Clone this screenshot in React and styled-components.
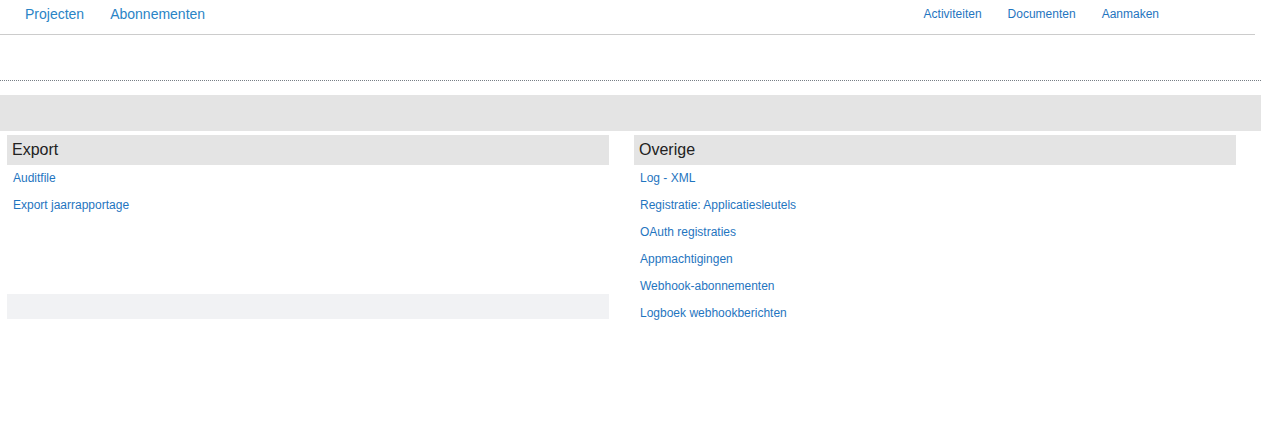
import React from 'react';
import styled, { createGlobalStyle } from 'styled-components';

const GlobalStyle = createGlobalStyle`
  body {
    margin: 0;
    background: #fff;
    font-family: "Liberation Sans", Arial, sans-serif;
  }
`;

const TopNav = styled.nav`
  display: flex;
  justify-content: space-between;
  width: 1255px;
  height: 34px;
  border-bottom: 1px solid #cccccc;
`;

const NavGroup = styled.div`
  display: flex;
  gap: 26px;
  padding: ${(p) => (p.right ? '0 96px 0 0' : '0 0 0 25px')};
`;

const NavLink = styled.a`
  line-height: 28px;
  font-size: ${(p) => (p.small ? '12px' : '14px')};
  color: ${(p) => (p.small ? '#1f75c0' : '#2a84c6')};
  text-decoration: none;
  cursor: pointer;
`;

const DottedRule = styled.div`
  margin-top: 45px;
  border-top: 1px dotted #777e85;
`;

const Band = styled.div`
  margin-top: 14px;
  height: 36px;
  background: #e4e4e4;
`;

const Panels = styled.div`
  display: grid;
  grid-template-columns: 602px 602px;
  gap: 25px;
  padding: 4px 0 0 7px;
`;

const Panel = styled.section`
  display: flex;
  flex-direction: column;
`;

const PanelHeader = styled.h2`
  margin: 0;
  height: 30px;
  line-height: 30px;
  padding-left: 5px;
  background: #e4e4e4;
  font-size: 16px;
  font-weight: normal;
  color: #222;
`;

const LinkList = styled.ul`
  list-style: none;
  margin: 0;
  padding: 0;
`;

const Item = styled.li`
  height: 27px;
  line-height: 23px;
  padding-left: 6px;
`;

const ItemLink = styled.a`
  font-size: 12px;
  color: #1f75c0;
  text-decoration: none;
  cursor: pointer;
`;

const Footer = styled.div`
  margin-top: 75px;
  height: 25px;
  background: #f1f2f4;
`;

const exportLinks = ['Auditfile', 'Export jaarrapportage'];
const overigLinks = [
  'Log - XML',
  'Registratie: Applicatiesleutels',
  'OAuth registraties',
  'Appmachtigingen',
  'Webhook-abonnementen',
  'Logboek webhookberichten',
];

export default function App() {
  return (
    <>
      <GlobalStyle />
      <TopNav>
        <NavGroup>
          <NavLink>Projecten</NavLink>
          <NavLink>Abonnementen</NavLink>
        </NavGroup>
        <NavGroup right>
          <NavLink small>Activiteiten</NavLink>
          <NavLink small>Documenten</NavLink>
          <NavLink small>Aanmaken</NavLink>
        </NavGroup>
      </TopNav>
      <DottedRule />
      <Band />
      <Panels>
        <Panel>
          <PanelHeader>Export</PanelHeader>
          <LinkList>
            {exportLinks.map((l) => (
              <Item key={l}>
                <ItemLink>{l}</ItemLink>
              </Item>
            ))}
          </LinkList>
          <Footer />
        </Panel>
        <Panel>
          <PanelHeader>Overige</PanelHeader>
          <LinkList>
            {overigLinks.map((l) => (
              <Item key={l}>
                <ItemLink>{l}</ItemLink>
              </Item>
            ))}
          </LinkList>
        </Panel>
      </Panels>
    </>
  );
}
